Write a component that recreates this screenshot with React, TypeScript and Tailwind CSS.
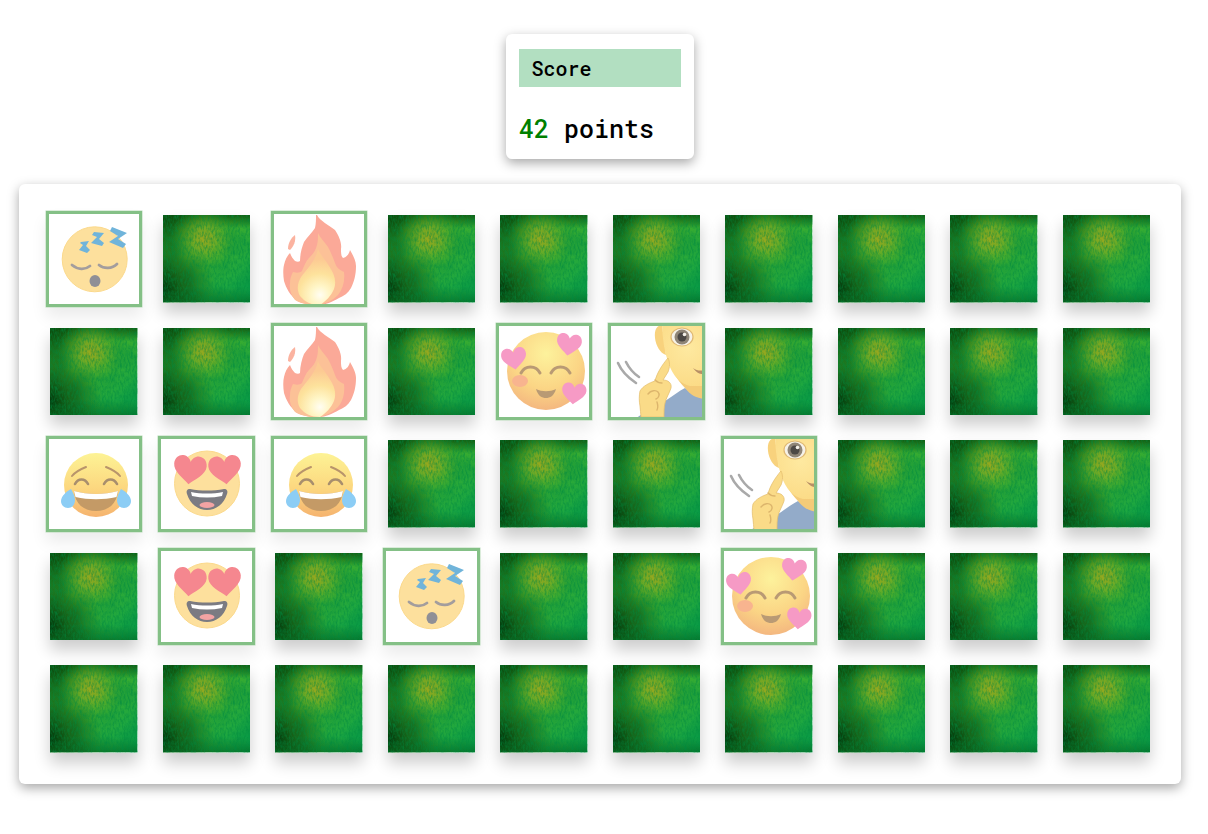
type TileKind = 'sleep' | 'fire' | 'hearts' | 'ear' | 'joy' | 'love' | null;

// one row per line of the board, null = face down
const board: TileKind[][] = [
  ['sleep', null, 'fire', null, null, null, null, null, null, null],
  [null, null, 'fire', null, 'hearts', 'ear', null, null, null, null],
  ['joy', 'love', 'joy', null, null, null, 'ear', null, null, null],
  [null, 'love', null, 'sleep', null, null, 'hearts', null, null, null],
  [null, null, null, null, null, null, null, null, null, null],
];

function Heart({ x, y, s, fill, rotate = 0 }: { x: number; y: number; s: number; fill: string; rotate?: number }) {
  return (
    <path
      transform={`translate(${x} ${y}) rotate(${rotate}) scale(${s})`}
      d="M0 15C-5 10-16 4-16-4-16-10-12-13-8-13-4-13-1-10 0-7 1-10 4-13 8-13 12-13 16-10 16-4 16 4 5 10 0 15Z"
      fill={fill}
    />
  );
}

function SleepFace() {
  return (
    <>
      <circle cx="48.7" cy="48.3" r="32.5" fill="#fde09d" stroke="#fbd98c" strokeWidth="1" />
      <path d="M66 16l15 6-9 6 8 5-3 4-14-6 9-6-8-5z" fill="#70b4da" />
      <path d="M48 21l10 1-5 6 5 4-2 3-11-3 6-6-5-2z" fill="#70b4da" />
      <path d="M35 31l8-1-3 5 4 4-3 3-8-3 4-5-3-2z" fill="#70b4da" />
      <path d="M26 54c6 5 13 5 18 1" fill="none" stroke="#a39d9d" strokeWidth="2.8" strokeLinecap="round" />
      <path d="M53 54c5 4 13 4 18-1" fill="none" stroke="#a39d9d" strokeWidth="2.8" strokeLinecap="round" />
      <ellipse cx="49" cy="70" rx="5.5" ry="6" fill="#8f8f96" />
    </>
  );
}

function FireFace() {
  return (
    <>
      <defs>
        <radialGradient id="fireCore" gradientUnits="userSpaceOnUse" cx="49" cy="84" r="36">
          <stop offset="0%" stopColor="#fffdf2" />
          <stop offset="25%" stopColor="#fff6c8" />
          <stop offset="60%" stopColor="#fde29c" />
          <stop offset="100%" stopColor="#fcca93" />
        </radialGradient>
      </defs>
      <path d="M17 38c0-6 3-11 7-14 1 6-1 11-5 15z" fill="#fbb3a0" />
      <path
        d="M46 4c3 6 12 10 18 15 4 6 7 13 6 19 0 4 0 7 2 9 4-1 6-4 7-8 3 5 6 11 6 16 0 9-2 16-5 22-3 5-7 8-12 10-7 4-14 7-19 7-9 0-17-1-23-4-7-6-11-13-13-20-1-6-1-12 0-16 1-5 3-9 6-12 1 3 3 6 5 8 2 1 4 1 5 0 0-7 2-14 4-19 3-5 8-9 11-14 1-4 1-9 1-13z"
        fill="#fba998"
      />
      <path
        d="M47 22c2 5 7 9 10 14 3 5 5 11 7 16 1 4 4 7 9 9 1 9-1 17-6 23-5 5-11 8-18 10-9 1-18-1-25-5-4-5-6-11-5-17 0-4 1-7 3-11 4 1 7 1 9-1 2-5 4-10 7-13 4-4 7-8 8-13 1-4 1-8 1-12z"
        fill="#fcc197"
      />
      <path d="M47 38c2 6 8 11 11 17 5 7 8 15 5 23-3 7-8 12-14 16-9 0-15-3-20-9-4-7-2-14 1-19 6-8 15-17 17-28z" fill="url(#fireCore)" />
    </>
  );
}

function HeartsFace() {
  return (
    <>
      <defs>
        <radialGradient id="warm" cx="50%" cy="28%" r="75%">
          <stop offset="0%" stopColor="#fdf29c" />
          <stop offset="60%" stopColor="#fbd585" />
          <stop offset="100%" stopColor="#f3b47f" />
        </radialGradient>
      </defs>
      <circle cx="50" cy="48" r="39" fill="url(#warm)" />
      <ellipse cx="24" cy="58" rx="8" ry="6" fill="#f8b48f" />
      <path d="M25 50c4-8 15-8 19 0" fill="none" stroke="#b99a74" strokeWidth="3" strokeLinecap="round" />
      <path d="M55 50c4-8 15-8 19 0" fill="none" stroke="#b99a74" strokeWidth="3" strokeLinecap="round" />
      <path d="M40 66c6 3 14 3 20 0-2 7-6 9-10 9s-8-2-10-9z" fill="#b99a74" />
      <Heart x={73} y={21} s={0.78} fill="#f69ac5" rotate={8} />
      <Heart x={18} y={35} s={0.78} fill="#f69ac5" rotate={-8} />
      <Heart x={78} y={70} s={0.76} fill="#f69ac5" rotate={6} />
    </>
  );
}

function EarFace() {
  return (
    <>
      <defs>
        <radialGradient id="headGrad" gradientUnits="userSpaceOnUse" cx="80" cy="25" r="45">
          <stop offset="0%" stopColor="#fee9a0" />
          <stop offset="100%" stopColor="#fbd983" />
        </radialGradient>
      </defs>
      <path d="M27 96c8-6 18-12 30-18 8-5 14-10 20-13 6 4 14 8 20 10v21z" fill="#93abc9" />
      <path d="M66 50h31v26c-8-1-14-3-20-11-4-4-8-9-11-15z" fill="#f4cb78" />
      <path d="M54 2c-5 0-8 5-7 13 1 8 5 15 11 17z" fill="#f8d27d" />
      <path d="M54-3h43v66H82c-9-2-17-9-22-24-4-12-6-26-6-42z" fill="url(#headGrad)" />
      <ellipse cx="74" cy="14" rx="11" ry="9" fill="#f6f2e8" stroke="#e0b974" strokeWidth="1.2" />
      <circle cx="74" cy="14" r="7.5" fill="#8f8577" />
      <circle cx="74" cy="14" r="4.5" fill="#4c4845" />
      <circle cx="76.5" cy="11.5" r="1.8" fill="#f4f0e8" />
      <path d="M97 27c-3 3-4 8-2 12l2 1z" fill="#f2c873" />
      <path d="M85 45c4 3 8 3 12 2v4c-5 1-9-2-12-6z" fill="#b78f66" />
      <path d="M32 68c3-5 9-8 15-10 2-8 7-16 13-23 2 4 2 9 0 14l-5 8c5 0 9 3 8 8-2 6-5 10-6 15-1 4-1 8-1 14H33c0-4-1-7-1-11-1-5-1-10 0-15z" fill="#fadb88" stroke="#e6c070" strokeWidth="0.8" />
      <path d="M40 71c3-4 8-4 10-2 2 2 1 6-2 7M47 57c2 2 4 3 7 3M49 79c1 3 1 6 0 8" fill="none" stroke="#dcb56c" strokeWidth="1.4" strokeLinecap="round" />
      <path d="M10 40c3 7 9 14 18 20" fill="none" stroke="#a9a9a9" strokeWidth="2.6" strokeLinecap="round" />
      <path d="M18 39c3 6 7 11 13 15" fill="none" stroke="#a9a9a9" strokeWidth="2.6" strokeLinecap="round" />
    </>
  );
}

function JoyFace() {
  return (
    <>
      <defs>
        <linearGradient id="joyGrad" x1="0" y1="0" x2="0" y2="1">
          <stop offset="0%" stopColor="#fdf395" />
          <stop offset="55%" stopColor="#fcd77f" />
          <stop offset="100%" stopColor="#f5b36f" />
        </linearGradient>
      </defs>
      <circle cx="50" cy="49" r="32" fill="url(#joyGrad)" />
      <path d="M26 40c4-5 9-7 14-9" fill="none" stroke="#b8946b" strokeWidth="2" strokeLinecap="round" />
      <path d="M74 40c-4-5-9-7-14-9" fill="none" stroke="#b8946b" strokeWidth="2" strokeLinecap="round" />
      <path d="M29 48c3-6 10-6 13 0M58 48c3-6 10-6 13 0" fill="none" stroke="#a88e6d" strokeWidth="2.6" strokeLinecap="round" />
      <path d="M28 55c14 4 30 4 44 0-1 13-10 20-22 20s-21-7-22-20z" fill="#c49a66" />
      <path d="M28 55c14 4 30 4 44 0l-1.5 6c-13 3-28 3-41 0z" fill="#ffffff" />
      <path d="M25 53c2 4 4 7 4 11 0 5-3 8-7 8s-7-3-7-7c0-5 6-10 10-12z" fill="#8ccdf5" />
      <path d="M75 53c-2 4-4 7-4 11 0 5 3 8 7 8s7-3 7-7c0-5-6-10-10-12z" fill="#8ccdf5" />
    </>
  );
}

function LoveFace() {
  return (
    <>
      <circle cx="49" cy="47.5" r="32.5" fill="#fde09d" stroke="#fbd98c" strokeWidth="1" />
      <path d="M32 53c11 2 23 2 34 0 3 0 4 2 3 5-3 10-11 16-20 16s-17-6-20-16c-1-3 0-5 3-5z" fill="#7b7b82" />
      <path d="M33 56c10 2 22 2 32 0l-1 4c-10 2-20 2-30 0z" fill="#ffffff" />
      <ellipse cx="49" cy="69" rx="7.5" ry="3" fill="#f3a3a3" />
      <Heart x={32} y={33} s={1.02} fill="#f5878f" rotate={6} />
      <Heart x={67} y={33} s={1.02} fill="#f5878f" rotate={-6} />
    </>
  );
}

const faces = {
  sleep: SleepFace,
  fire: FireFace,
  hearts: HeartsFace,
  ear: EarFace,
  joy: JoyFace,
  love: LoveFace,
};

// Face-down texture, drawn once and reused
function TileDefs() {
  return (
    <svg className="absolute h-0 w-0" aria-hidden="true">
      <defs>
        <linearGradient id="tileBase" x1="0" y1="0" x2="1" y2="1">
          <stop offset="0%" stopColor="#2a8e22" />
          <stop offset="50%" stopColor="#38ab30" />
          <stop offset="100%" stopColor="#06a34e" />
        </linearGradient>
        <radialGradient id="tileGlow" cx="47%" cy="27%" r="38%">
          <stop offset="0%" stopColor="#a6a81c" stopOpacity="0.9" />
          <stop offset="35%" stopColor="#8aad22" stopOpacity="0.7" />
          <stop offset="100%" stopColor="#3aa82a" stopOpacity="0" />
        </radialGradient>
        <linearGradient id="tileEdges" x1="0" y1="0" x2="0" y2="1">
          <stop offset="0%" stopColor="#0c4f0e" stopOpacity="0.8" />
          <stop offset="15%" stopColor="#0c4f0e" stopOpacity="0" />
          <stop offset="82%" stopColor="#045c1c" stopOpacity="0" />
          <stop offset="100%" stopColor="#045c1c" stopOpacity="0.6" />
        </linearGradient>
        <radialGradient id="tileBottomLeft" cx="0%" cy="85%" r="60%">
          <stop offset="0%" stopColor="#023a0c" />
          <stop offset="100%" stopColor="#023a0c" stopOpacity="0" />
        </radialGradient>
        <radialGradient id="tileTopLeft" cx="0%" cy="0%" r="50%">
          <stop offset="0%" stopColor="#07430b" stopOpacity="0.9" />
          <stop offset="100%" stopColor="#07430b" stopOpacity="0" />
        </radialGradient>
        <filter id="tileGrain" x="0" y="0" width="100%" height="100%">
          <feTurbulence type="fractalNoise" baseFrequency="0.55 0.22" numOctaves="3" seed="7" />
          <feColorMatrix values="0 0 0 0 0  0 0 0 0 0.25  0 0 0 0 0.05  1.3 0 0 0 -0.48" />
          <feGaussianBlur stdDeviation="0.35" />
        </filter>
        <filter id="tileMottle" x="0" y="0" width="100%" height="100%">
          <feTurbulence type="fractalNoise" baseFrequency="0.05" numOctaves="2" seed="3" />
          <feColorMatrix values="0 0 0 0 0  0 0 0 0 0.25  0 0 0 0 0.05  1 0 0 0 -0.42" />
        </filter>
        <symbol id="tileBack" viewBox="0 0 88 88" preserveAspectRatio="none">
          <rect width="88" height="88" fill="url(#tileBase)" />
          <rect width="88" height="88" filter="url(#tileMottle)" />
          <rect width="88" height="88" fill="url(#tileBottomLeft)" />
          <rect width="88" height="88" fill="url(#tileTopLeft)" />
          <rect width="88" height="88" fill="url(#tileEdges)" />
          <rect width="88" height="88" fill="url(#tileGlow)" />
          <rect width="88" height="88" filter="url(#tileGrain)" />
        </symbol>
      </defs>
    </svg>
  );
}

function Tile({ kind }: { kind: TileKind }) {
  if (!kind) {
    return (
      <div className="h-[87.5px] w-[87.5px] shadow-[0_10px_15px_rgba(0,0,0,0.2)]">
        <svg className="block h-full w-full">
          <use href="#tileBack" width="100%" height="100%" />
        </svg>
      </div>
    );
  }
  const Face = faces[kind];
  return (
    <div className="h-[96.5px] w-[96.5px] border-[3px] border-[#84c086] bg-white shadow-[0_0_0_0.5px_#b9dcba,0_10px_15px_rgba(0,0,0,0.08)]">
      <svg viewBox="3 3 90.5 90.5" className="block h-full w-full overflow-hidden">
        <g className="blur-[0.4px]">
          <Face />
        </g>
      </svg>
    </div>
  );
}

export default function App() {
  return (
    <div className="flex w-[1200px] flex-col items-center pt-[34px] pb-[50px] font-['Roboto_Mono','DejaVu_Sans_Mono',monospace] text-black">
      <TileDefs />

      {/* Score */}
      <div className="h-[125px] w-[188px] rounded-md bg-white px-[13px] pt-[15px] shadow-[0_4px_12px_rgba(0,0,0,0.35)]">
        <div className="flex h-[38px] items-center bg-[#b2dfc1] px-[12.5px] text-[20px] leading-none font-medium">Score</div>
        <p className="mt-[26px] text-[25px] leading-[32px] font-medium whitespace-nowrap">
          <span className="text-[#008000]">42</span> points
        </p>
      </div>

      {/* Board */}
      <div className="mt-[25px] grid w-[1162.5px] grid-cols-10 rounded-md bg-white p-[18.75px] shadow-[0_4px_12px_rgba(0,0,0,0.35)]">
        {board.flat().map((kind, i) => (
          <div key={i} className="flex h-[112.5px] items-center justify-center">
            <Tile kind={kind} />
          </div>
        ))}
      </div>
    </div>
  );
}
